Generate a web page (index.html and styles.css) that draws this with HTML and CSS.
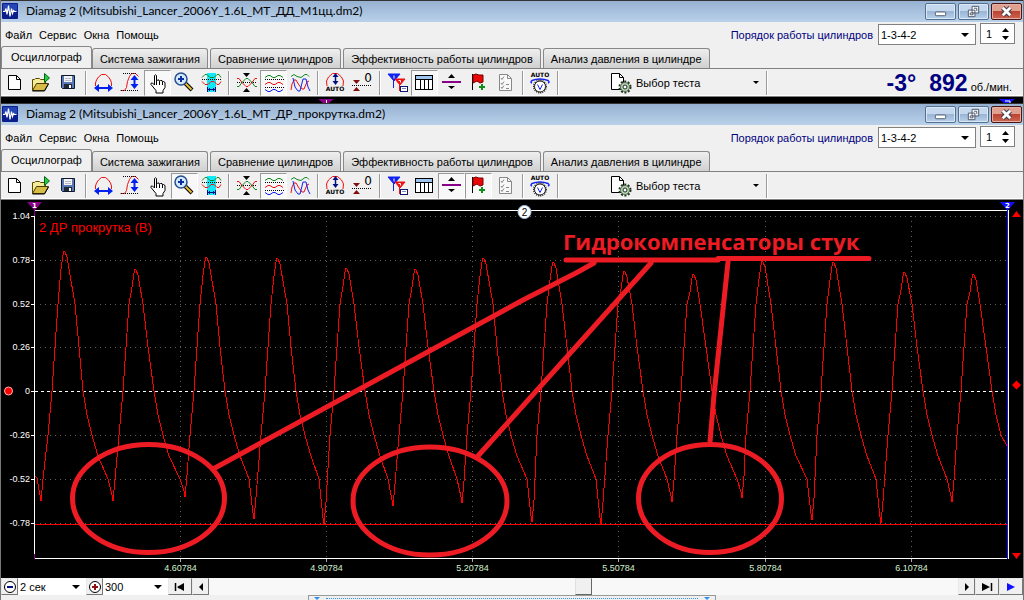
FILE: index.html
```html
<!DOCTYPE html>
<html lang="ru">
<head>
<meta charset="utf-8">
<title>Diamag 2</title>
<link rel="stylesheet" href="styles.css">
</head>
<body>
<svg class="sprite" aria-hidden="true">
  <symbol id="i-app" viewBox="0 0 16 16"><rect width="16" height="16" rx="1" fill="#0a1e8c"/><rect x="1" y="1" width="14" height="7" fill="#2446b4"/><path d="M1 8.500h2l1-3 1 6 1.500-9 1.500 11 1.500-8 1 5 1-3 1 1h2" fill="none" stroke="#fff" stroke-width="1.200"/></symbol>
  <symbol id="i-new" viewBox="0 0 24 24"><path d="M5.500 4.500h8l4 4v10h-12z" fill="#fff" stroke="#000"/><path d="M13.500 4.500v4h4" fill="none" stroke="#000"/></symbol>
  <symbol id="i-open" viewBox="0 0 24 24"><path d="M2.500 19.500v-11h2l1-1h4l1 1h5v4" fill="#f4ec9a" stroke="#5a4a00"/><path d="M2.500 19.500l4-7h12l-4 7z" fill="#d8bc48" stroke="#4a3c00"/><path d="M2.500 20h12l4-7" fill="none" stroke="#000"/><path d="M14.500 2.500v9l5-4.500z" fill="#20d040" stroke="#086018"/></symbol>
  <symbol id="i-save" viewBox="0 0 24 24"><path d="M4.500 4.500h13v13h-12l-1-1z" fill="#5a78b4" stroke="#101830"/><rect x="7" y="5" width="8" height="6" fill="#f4f4f4"/><path d="M8 7.500h6M8 9.500h6" stroke="#b8b8c4"/><rect x="7" y="13" width="8" height="4" fill="#202838"/><rect x="12" y="14" width="2" height="3" fill="#fff"/></symbol>
  <symbol id="i-period" viewBox="0 0 24 24"><path d="M3.500 15v-3l1-3 2-3 3-2.500h4l3 2.500 2 3 1 3v3" fill="none" stroke="#f01010"/><path d="M5 17h13" stroke="#0020f0" stroke-width="2"/><path d="M2 17l5-4v8zM21 17l-5-4v8z" fill="#0020f0"/></symbol>
  <symbol id="i-ampl" viewBox="0 0 24 24"><path d="M1.500 19.500h4l2-3 1-6 2-5 2-3h4l3 3" fill="none" stroke="#f01010"/><path d="M4 2.500h14M2 19.500h17" stroke="#000" stroke-dasharray="1 1"/><path d="M15.500 8v7" stroke="#0020f0" stroke-width="2"/><path d="M15.500 4l-4 5h8zM15.500 18l-4-5h8z" fill="#0020f0"/></symbol>
  <symbol id="i-hand" viewBox="0 0 24 24"><path d="M8.500 14V4.500q1-1.500 2 0V10l1-1h1.500l.5 1.500 1-1h1.500l.5 1.500 1-.5 1.500 1v5l-2 3v2.500h-7v-2.500l-5-6q-.500-2 1.500-1.500z" fill="#fff" stroke="#000"/><path d="M10.500 10v4M13.500 10.500v3.500M16.500 11v3" stroke="#000"/></symbol>
  <symbol id="i-zoom" viewBox="0 0 24 24"><path d="M12 12l7 7" stroke="#000" stroke-width="4"/><path d="M12.500 12.500l6 6" stroke="#e8c030" stroke-width="2"/><circle cx="8" cy="8" r="6" fill="#d4eafc" stroke="#28508c" stroke-width="1.500"/><path d="M5 8h6M8 5v6" stroke="#0830a0" stroke-width="2"/></symbol>
  <symbol id="i-range" viewBox="0 0 24 24"><rect x="7" y="2" width="9" height="19" fill="#10e8f8"/><path d="M2 6.500l3-3h2l3 3h4l3-3h2l2 3" fill="none" stroke="#108820"/><path d="M2 8.500h19" stroke="#000" stroke-dasharray="1 1"/><path d="M2 10.500l3 3h3l3-3h3l3 3h2l2-3" fill="none" stroke="#f01010"/><path d="M7 18.500h9M7.500 16v5M15.500 16v5M9.500 17v3M13.500 17v3" stroke="#001080"/></symbol>
  <symbol id="i-level" viewBox="0 0 24 24"><path d="M8 2h7l-3.500 4zM8 21h7l-3.500-4z" fill="#000"/><path d="M2 11.500h20" stroke="#000" stroke-dasharray="1 1"/><path d="M2 7.500h2l3 4 4 4h2l4-4 3-4h2" fill="none" stroke="#f01010"/><path d="M2 15.500h2l3-4 4-4h2l4 4 3 4h2" fill="none" stroke="#108820"/></symbol>
  <symbol id="i-split" viewBox="0 0 24 24"><path d="M3 6.500l3-2h2l3 2h2l3-2h2l3 2" fill="none" stroke="#108820"/><path d="M3 8.500h19M3 16.500h19" stroke="#000" stroke-dasharray="1 1"/><path d="M3 13.500l3-2h2l3 2h2l3-2h2l3 2" fill="none" stroke="#f01010"/><path d="M3 18.500l3 2h2l3-2h2l3 2h2l3-2" fill="none" stroke="#1020f0"/></symbol>
  <symbol id="i-merge" viewBox="0 0 24 24"><path d="M2 5.500l3-2 3 2 4 1 4-3h2l2 2" fill="none" stroke="#108820"/><path d="M2 19l1-6 2-4h2l3 5 3 4h2l3-7 2-1" fill="none" stroke="#f01010"/><path d="M4 7l2 9 3 4h2l2-8 1-4h3l2 8 2 4" fill="none" stroke="#1020f0"/></symbol>
  <symbol id="i-auto" viewBox="0 0 24 24"><path d="M3 15l-.5-5 2-4 4-3.500h5l4 3.500 2 4-.5 5" fill="none" stroke="#f01010"/><path d="M11.500 4v8" stroke="#001080" stroke-width="1.500"/><path d="M11.500 2l-3 4h6zM11.500 14l-3-4h6z" fill="#001080"/></symbol>
  <symbol id="i-zero" viewBox="0 0 24 24"><path d="M1 14.500h19" stroke="#000" stroke-dasharray="1 1"/><path d="M2 9h7l-3.500 4zM2 20h7l-3.500-4z" fill="#801010"/></symbol>
  <symbol id="i-markers" viewBox="0 0 24 24"><path d="M2 3h12l-6 7zM7.500 8v9" fill="#1020f0" stroke="#1020f0"/><path d="M9 8h10l-5 6zM13.500 13v7" fill="#f01010" stroke="#f01010"/><path d="M8 4.500v3M12.500 9.500h2v2" fill="none" stroke="#fff"/><rect x="14.500" y="15.500" width="7" height="5" fill="#fff" stroke="#101870"/><path d="M16 17.500h4" stroke="#8088b0"/></symbol>
  <symbol id="i-table" viewBox="0 0 24 24"><rect x="2.500" y="4.500" width="17" height="14" fill="#fff" stroke="#000"/><rect x="3" y="5" width="16" height="3" fill="#a0c4f0"/><path d="M3 8.500h16M7.500 8v10M11.500 8v10M15.500 8v10" stroke="#000"/></symbol>
  <symbol id="i-move" viewBox="0 0 24 24"><path d="M2 11h19" stroke="#880088" stroke-width="2"/><path d="M8 7h7l-3.500-4zM8 15h7l-3.500 3z" fill="#000"/></symbol>
  <symbol id="i-flag" viewBox="0 0 24 24"><path d="M5.500 3v16" stroke="#000"/><path d="M6 4l3-1 3 1 4 0v7l-3 1-3-2-4 2z" fill="#e80808" stroke="#700"/><path d="M12 16h6M15 13v6" stroke="#109018" stroke-width="2"/></symbol>
  <symbol id="i-check" viewBox="0 0 24 24"><path d="M5.500 3.500h8l4 4v12h-12z" fill="#f8f8f8" stroke="#888"/><path d="M13.500 3.500v4h4M7 7l1 1.500 2-3M7 12l1 1.500 2-3M7 16l1 1.500 2-3M12 13.500h3M12 17.500h3" fill="none" stroke="#888"/></symbol>
  <symbol id="i-gauge" viewBox="0 0 24 24"><path d="M3 12q-2-1 0-2.500 8-3 16 0 2 1.500 0 2.500" fill="none" stroke="#1020f0" stroke-width="1.500"/><circle cx="11" cy="15.500" r="6" fill="none" stroke="#222" stroke-width="2" stroke-dasharray="1 1"/><circle cx="11" cy="15.500" r="5.500" fill="#fff" stroke="#222"/><path d="M8.500 13.500l2.500 5 2.500-5" fill="none" stroke="#1020f0"/></symbol>
  <symbol id="i-test" viewBox="0 0 24 24"><path d="M2.500 2.500h8l4 4v12h-12z" fill="#fff" stroke="#000"/><path d="M10.500 2.500v4h4" fill="none" stroke="#000"/><circle cx="16" cy="16" r="5.500" fill="none" stroke="#203020" stroke-width="2" stroke-dasharray="2 1.500"/><circle cx="16" cy="16" r="4.500" fill="#b8d0b4" stroke="#507050"/><circle cx="16" cy="16" r="2" fill="#fff" stroke="#203020"/></symbol>
</svg>

<template id="window-head">
  <header class="titlebar">
    <svg class="app-icon"><use href="#i-app"/></svg>
    <h1 class="caption"></h1>
    <div class="caption-buttons">
      <button class="cap" aria-label="Свернуть"><svg viewBox="0 0 30 16"><rect x="9.500" y="8.500" width="11" height="4" rx="1" fill="#fff" stroke="#4a5568"/></svg></button>
      <button class="cap" aria-label="Восстановить"><svg viewBox="0 0 30 16"><path d="M13.500 2.500h7v7h-7zM9.500 6.500h7v7h-7z" fill="#fff" stroke="#4a5568"/><path d="M15.500 4.500h3v3M11.500 9.500h3v2h-3z" fill="none" stroke="#4a5568"/></svg></button>
      <button class="cap close" aria-label="Закрыть"><svg viewBox="0 0 30 16"><path d="M11 4l8 8M19 4l-8 8" stroke="#3c3c50" stroke-width="5"/><path d="M11 4l8 8M19 4l-8 8" stroke="#fff" stroke-width="3"/></svg></button>
    </div>
  </header>
  <div class="menu-row">
    <nav class="menu"><a href="#">Файл</a><a href="#">Сервис</a><a href="#">Окна</a><a href="#">Помощь</a></nav>
    <div class="order">
      <label class="order-label">Порядок работы цилиндров
        <span class="select-box order-select"><select><option>1-3-4-2</option></select></span>
      </label>
      <span class="spin"><input type="number" value="1" aria-label="Цилиндр"><svg viewBox="0 0 7 12"><path d="M0 4h7l-3.500-4zM0 8h7l-3.500 4z"/></svg></span>
    </div>
  </div>
  <div class="tabs" role="tablist">
    <button class="tab active" role="tab" aria-selected="true">Осциллограф</button>
    <button class="tab" role="tab">Система зажигания</button>
    <button class="tab" role="tab">Сравнение цилиндров</button>
    <button class="tab" role="tab">Эффективность работы цилиндров</button>
    <button class="tab" role="tab">Анализ давления в цилиндре</button>
  </div>
  <div class="toolbar" role="toolbar">
    <button class="tool" aria-label="Новый"><svg><use href="#i-new"/></svg></button>
    <button class="tool" aria-label="Открыть"><svg><use href="#i-open"/></svg></button>
    <button class="tool" aria-label="Сохранить"><svg><use href="#i-save"/></svg></button>
    <span class="sep"></span>
    <button class="tool" aria-label="Период"><svg><use href="#i-period"/></svg></button>
    <button class="tool" aria-label="Амплитуда"><svg><use href="#i-ampl"/></svg></button>
    <button class="tool" data-tool="hand" aria-label="Рука"><svg><use href="#i-hand"/></svg></button>
    <button class="tool" data-tool="zoom" aria-label="Лупа"><svg><use href="#i-zoom"/></svg></button>
    <button class="tool" aria-label="Интервал"><svg><use href="#i-range"/></svg></button>
    <span class="sep"></span>
    <button class="tool" aria-label="Уровень"><svg><use href="#i-level"/></svg></button>
    <button class="tool" data-tool="split" aria-label="Раздельно"><svg><use href="#i-split"/></svg></button>
    <button class="tool" aria-label="Совместно"><svg><use href="#i-merge"/></svg></button>
    <span class="sep"></span>
    <button class="tool" aria-label="Автомасштаб"><svg viewBox="0 0 24 24"><use href="#i-auto"/><text x="11" y="20" class="tiny">AUTO</text></svg></button>
    <button class="tool" aria-label="Ноль"><svg viewBox="0 0 24 24"><use href="#i-zero"/><text x="17" y="11" class="zero">0</text></svg></button>
    <span class="sep"></span>
    <button class="tool" aria-label="Маркеры"><svg><use href="#i-markers"/></svg></button>
    <button class="tool" data-tool="table" aria-label="Таблица"><svg><use href="#i-table"/></svg></button>
    <button class="tool" data-tool="move" aria-label="Линия"><svg><use href="#i-move"/></svg></button>
    <button class="tool" data-tool="flag" aria-label="Флаг"><svg><use href="#i-flag"/></svg></button>
    <button class="tool" aria-label="Список"><svg><use href="#i-check"/></svg></button>
    <span class="sep"></span>
    <button class="tool" aria-label="Автоизмерение"><svg viewBox="0 0 24 24"><use href="#i-gauge"/><text x="11" y="6" class="tiny">AUTO</text></svg></button>
    <span class="sep"></span>
    <button class="test"><svg><use href="#i-test"/></svg><span>Выбор теста</span><i class="arrow"></i></button>
    <span class="sep"></span>
    <output class="readout"></output>
  </div>
</template>

<main class="desktop">
  <section class="window" data-title="Diamag 2 (Mitsubishi_Lancer_2006Y_1.6L_MT_ДД_М1цц.dm2)" data-pressed="hand split table" data-angle="-3°" data-rpm="892">
    <svg class="strip" viewBox="1 97 1022 6"><path d="M318 99h16l-5 4h-6z" fill="#880088"/><path d="M326.500 100v3" stroke="#fff"/><path d="M999 99h16l-5 4h-6z" fill="#1010ff"/><path d="M1005 101h5v2" fill="none" stroke="#fff"/></svg>
  </section>

  <section class="window" data-title="Diamag 2 (Mitsubishi_Lancer_2006Y_1.6L_MT_ДР_прокрутка.dm2)" data-pressed="zoom split move flag">
    <svg class="plot" viewBox="1 200 1022 378" role="img" aria-label="Осциллограмма">
      <g class="crisp">
        <path class="grid" d="M40 216.500h967M40 260.500h967M40 304.500h967M40 347.500h967M40 435.500h967M40 479.500h967M40 523.500h967"/>
        <path class="grid" d="M180.500 216v342M326.500 216v342M472.500 216v342M618.500 216v342M765.500 216v342M911.500 216v342"/>
        <path class="ticks" d="M31 216.500h4M31 260.500h4M31 304.500h4M31 347.500h4M31 391.500h4M31 435.500h4M31 479.500h4M31 523.500h4"/>
        <path class="ticks dim" d="M180.500 559v3M326.500 559v3M472.500 559v3M618.500 559v3M765.500 559v3M911.500 559v3"/>
        <path class="zero-line" d="M35 391.500h972"/>
        <path class="floor" d="M35 524.500h972"/>
        <path class="frame" d="M34.500 210v349M34 210.500h975M34 558.500h975M1008.500 210v349"/>
        <path d="M34.500 208v8M34.500 554v5" stroke="#880088"/>
        <path d="M1007.500 208v351" stroke="#1010ff"/>
      </g>
      <path id="wave" class="wave"/>
      <path d="M27 202h15l-7 8h-1z" fill="#880088"/><text class="marker" x="34.500" y="208">1</text>
      <path d="M1000 202h15l-7 8h-1z" fill="#1010ff"/><text class="marker" x="1007.500" y="208">2</text>
      <path d="M1012 217h9l-4.500-6zM1012 553h9l-4.500 6zM1012 385l4.500-4.500 4.500 4.500-4.500 4.500z" fill="#f00"/>
      <circle cx="8.500" cy="391" r="4" fill="#f00" stroke="#ffb0b0"/>
      <circle cx="524.500" cy="212" r="6.500" fill="#fff" stroke="#a8c8f0"/><text class="badge" x="524.500" y="216">2</text>
      <g class="y-labels">
        <text x="30" y="219">1.04</text><text x="30" y="263">0.78</text><text x="30" y="307">0.52</text><text x="30" y="350">0.26</text><text x="30" y="394">0</text><text x="30" y="438">-0.26</text><text x="30" y="482">-0.52</text><text x="30" y="526">-0.78</text>
      </g>
      <g class="x-labels">
        <text x="180.500" y="571">4.60784</text><text x="326.500" y="571">4.90784</text><text x="472.500" y="571">5.20784</text><text x="618.500" y="571">5.50784</text><text x="765.500" y="571">5.80784</text><text x="911.500" y="571">6.10784</text>
      </g>
      <text class="channel" x="39" y="232">2 ДР прокрутка (В)</text>
      <g class="notes">
        <ellipse cx="148.500" cy="498.500" rx="76" ry="54"/><ellipse cx="430" cy="501" rx="77" ry="54"/><ellipse cx="710" cy="498.500" rx="71.500" ry="54"/>
        <path d="M566 260h152M718 258.500h151"/>
        <path d="M594 263l-18 10-53 27-310 169M651 263l-174 194M728 262l-14 133-4 47"/>
        <text x="563" y="250">Гидрокомпенсаторы стук</text>
      </g>
    </svg>
  </section>
  <footer class="bottom">
    <div class="controls">
      <button class="btn" aria-label="Уменьшить"><svg viewBox="0 0 16 16"><circle cx="8" cy="8" r="5.500" fill="#fff" stroke="#000"/><path d="M5 8h6" stroke="#001080" stroke-width="2"/></svg></button>
      <span class="select-box time"><select aria-label="Время"><option>2 сек</option></select></span>
      <button class="btn" aria-label="Увеличить"><svg viewBox="0 0 16 16"><circle cx="8" cy="8" r="5.500" fill="#fff" stroke="#000"/><path d="M5 8h6M8 5v6" stroke="#901010" stroke-width="2"/></svg></button>
      <span class="select-box scale"><select aria-label="Масштаб"><option>300</option></select></span>
      <button class="btn wide" aria-label="В начало"><svg viewBox="0 0 16 16"><path d="M3.500 4v8M6 8.500h6" stroke="#000" stroke-width="1.500"/><path d="M5 8l7-4v8z"/></svg></button>
      <button class="btn" aria-label="Назад"><svg viewBox="0 0 16 16"><path d="M6 8l4-4v8z"/></svg></button>
      <input class="scroll" type="range" value="50" aria-label="Прокрутка">
      <button class="btn" aria-label="Вперёд"><svg viewBox="0 0 16 16"><path d="M10 8l-4-4v8z"/></svg></button>
      <button class="btn wide" aria-label="В конец"><svg viewBox="0 0 16 16"><path d="M12.500 4v8" stroke="#000" stroke-width="1.500"/><path d="M11 8l-8-4v8z"/></svg></button>
      <button class="btn wide" aria-label="Пуск"><svg viewBox="0 0 16 16"><path d="M12 8l-8-4v8z" fill="#1010ff"/></svg></button>
    </div>
    <div class="status"><div class="panel"><i class="grip"></i><span class="dots"></span><i class="grip"></i></div></div>
  </footer>
</main>
<script src="script.js"></script>
</body>
</html>
```
FILE: styles.css
```css
* { box-sizing: border-box; }
body { margin: 0; background: #f0f0f0; color: #000; font-family: "Liberation Sans", Arial, sans-serif; font-size: 11px; }
button, select, input { font: inherit; color: inherit; padding: 0; margin: 0; border: 0; background: none; border-radius: 0; }
.sprite { position: absolute; width: 0; height: 0; }
.desktop { display: flex; flex-direction: column; border-left: 1px solid #777; border-right: 1px solid #777; }
.window { display: flex; flex-direction: column; }

.titlebar { display: flex; align-items: center; height: 22px; padding: 0 1px 1px; border-top: 1px solid #333; background: linear-gradient(#96b1d1, #b9d1ea); }
.app-icon { width: 16px; height: 16px; }
.caption { flex: 1; margin: 0 0 0 8px; font: 400 12px/18px Lato, Roboto, sans-serif; white-space: nowrap; }
.caption-buttons { display: flex; gap: 2px; }
.cap { display: block; width: 31px; height: 17px; border: 1px solid #54708f; border-radius: 2px; background: linear-gradient(#c4d7ec 45%, #9ab6d6 50%, #b8d0ea); box-shadow: inset 0 0 0 1px #dbe8f6; }
.cap svg { display: block; width: 29px; height: 15px; }
.close { border-color: #4a1414; background: linear-gradient(#e0a090 45%, #bb4433 50%, #cc6650); box-shadow: inset 0 0 0 1px #e4b0a4; }

.menu-row { display: flex; justify-content: space-between; height: 24px; padding: 1px 8px 0 4px; }
.menu { display: flex; align-items: center; gap: 7px; }
.menu a { color: #000; text-decoration: none; }
.order { display: flex; gap: 4px; }
.order-label { display: flex; align-items: center; gap: 5px; color: #000080; }
.select-box { display: block; position: relative; background: #fff; color: #000; }
.select-box select { appearance: none; width: 100%; height: 100%; padding-left: 2px; background: transparent; display: block; }
.select-box::after { content: ""; position: absolute; right: 6px; top: 50%; margin-top: -2px; border: 4px solid transparent; border-top-color: #000; border-bottom: 0; pointer-events: none; }
.order-select { width: 98px; height: 21px; border: 1px solid #808080; }
.spin { display: flex; align-items: center; width: 35px; height: 21px; padding: 0 5px; border: 1px solid #808080; background: #fff; }
.spin input { appearance: textfield; width: 14px; flex: 1; min-width: 0; }
.spin input::-webkit-inner-spin-button { appearance: none; }
.spin svg { width: 7px; height: 12px; }

.tabs { display: flex; align-items: flex-end; gap: 2px; height: 22px; }
.tab { height: 20px; padding: 0 7px; border: 1px solid #888; border-bottom: 0; border-radius: 3px 3px 0 0; background: linear-gradient(#eee, #d0d0d0); white-space: nowrap; }
.tab.active { height: 22px; margin: 0 -2px 0 0; padding: 0 9px 2px; background: #f0f0f0; }

.toolbar { display: flex; align-items: center; height: 29px; border-top: 1px solid #808080; border-bottom: 1px solid #808080; box-shadow: inset 0 -1px #fff; }
.tool { display: grid; place-items: center; flex: none; width: 27px; height: 26px; border: 1px solid transparent; }
.tool svg { display: block; width: 24px; height: 24px; }
.tool.pressed { border-color: #999 #fff #fff #999; background: #f8f8f8; }
.sep { flex: none; width: 2px; height: 24px; margin: 0 3px; border-left: 1px solid #999; border-right: 1px solid #fff; }
.test { display: flex; align-items: center; flex: none; width: 201px; padding-left: 47px; height: 26px; }
.test svg { width: 24px; height: 24px; margin-right: 3px; }
.arrow { margin-left: auto; margin-right: 4px; border: 3px solid transparent; border-top-color: #000; border-bottom: 0; }
.readout { display: flex; align-items: baseline; justify-content: flex-end; flex: 1; padding-right: 11px; white-space: nowrap; }
.readout b { margin-right: 13px; color: #000080; font-size: 23px; line-height: 24px; }
.readout b + b { margin-right: 3px; }

.tiny { font: 700 6px "DejaVu Sans", sans-serif; text-anchor: middle; }
.zero { font: 12px "DejaVu Sans", sans-serif; text-anchor: middle; }

.strip, .plot { display: block; width: 100%; height: auto; background: #000; }
.crisp { shape-rendering: crispEdges; fill: none; }
.grid { stroke: #606060; stroke-dasharray: 1 4; }
.ticks, .frame { stroke: #fff; }
.ticks.dim { stroke: #aaa; }
.zero-line { stroke: #fff; stroke-dasharray: 3 3; }
.floor { stroke: #f00; }
.wave { fill: none; stroke: #f00; shape-rendering: crispEdges; }
.marker { fill: #fff; font: 700 7px "DejaVu Sans", sans-serif; text-anchor: middle; }
.badge { fill: #000; font: 10px "Liberation Sans", sans-serif; text-anchor: middle; }
.y-labels { fill: #fff; font-size: 9px; text-anchor: end; }
.x-labels { fill: #d4f0d0; font-size: 9px; text-anchor: middle; }
.channel { fill: #f00; font-size: 13px; }
.notes { fill: none; stroke: #ed1c24; stroke-width: 5; stroke-linecap: round; stroke-linejoin: round; }
.notes text { fill: #ed1c24; stroke: none; font: 700 22px "Open Sans", "Noto Sans", sans-serif; }

.controls { display: flex; height: 17px; background: #fff; }
.btn { flex: none; display: grid; place-items: center; width: 17px; height: 17px; border: 1px solid; border-color: #e8e8e8 #777 #777 #e8e8e8; background: #f0f0f0; }
.btn svg { display: block; width: 16px; height: 16px; }
.btn.wide { width: 24px; }
.time { width: 68px; }
.scale { width: 65px; }
.scroll { appearance: none; flex: 1; min-width: 0; height: 17px; background: #f8f8f8; }
.scroll::-webkit-slider-thumb { appearance: none; width: 17px; height: 17px; border: 1px solid; border-color: #e0e0e0 #666 #666 #e0e0e0; background: #f0f0f0; }
.status { display: flex; justify-content: center; height: 5px; }
.panel { display: flex; align-items: center; gap: 6px; width: 40%; padding: 0 5px; border: 1px solid #999; border-bottom: 0; }
.grip { border: 3px solid transparent; border-top-color: #3090f0; border-bottom: 0; }
.dots { flex: 1; border-top: 1px dotted #3090f0; }
```
FILE: script.js
```js
const head = document.getElementById("window-head");
for (const win of document.querySelectorAll(".window")) {
  const node = head.content.cloneNode(true);
  node.querySelector(".caption").textContent = win.dataset.title;
  for (const name of win.dataset.pressed.split(" ")) {
    const tool = node.querySelector(`[data-tool="${name}"]`);
    tool.classList.add("pressed");
    tool.setAttribute("aria-pressed", "true");
  }
  if (win.dataset.rpm) {
    node.querySelector(".readout").innerHTML =
      `<b>${win.dataset.angle}</b><b>${win.dataset.rpm}</b>об./мин.`;
  }
  win.prepend(node);
}

// Signal extrema: [x, y]
const peaks = [[64, 251], [135, 269], [206, 257], [277, 258], [346, 268], [415, 269], [483, 258],
  [553, 262], [624, 271], [693, 274], [762, 261], [833, 262], [904, 272], [973, 274]];
const troughs = [[41, 501], [113, 501], [185, 497], [254, 519], [324, 524], [393, 506], [462, 503],
  [532, 522], [601, 524], [672, 502], [742, 498], [812, 520], [881, 523], [952, 502]];
const points = [[35, 476], [37, 478]];
peaks.forEach(([x, y], i) => {
  const [tx, ty] = troughs[i];
  const drop = (y - 251) / 6;
  const shoulder = Math.round(11 - drop);
  points.push([tx, ty], [tx + 2, ty - 22], [x - 16, 435], [x - 12, 391], [x - 9, 347],
    [x - 6, 304], [x - 3, y + 18], [x - 1, y + 4], [x, y], [x + 1, y + 1], [x + 3, y + 6],
    [x + shoulder, 304], [x + Math.round(15 - drop * 0.6), 347], [x + 19, 391],
    [x + 23, 415], [x + 28, 435]);
  const next = troughs[i + 1];
  if (next) points.push([x + 34, 456], [next[0] - 5, 479], [next[0] - 1, next[1] - 6]);
});
points.push([1007, 446]);
document.getElementById("wave").setAttribute("d", "M" + points.map(p => p.join(" ")).join("L"));
```
